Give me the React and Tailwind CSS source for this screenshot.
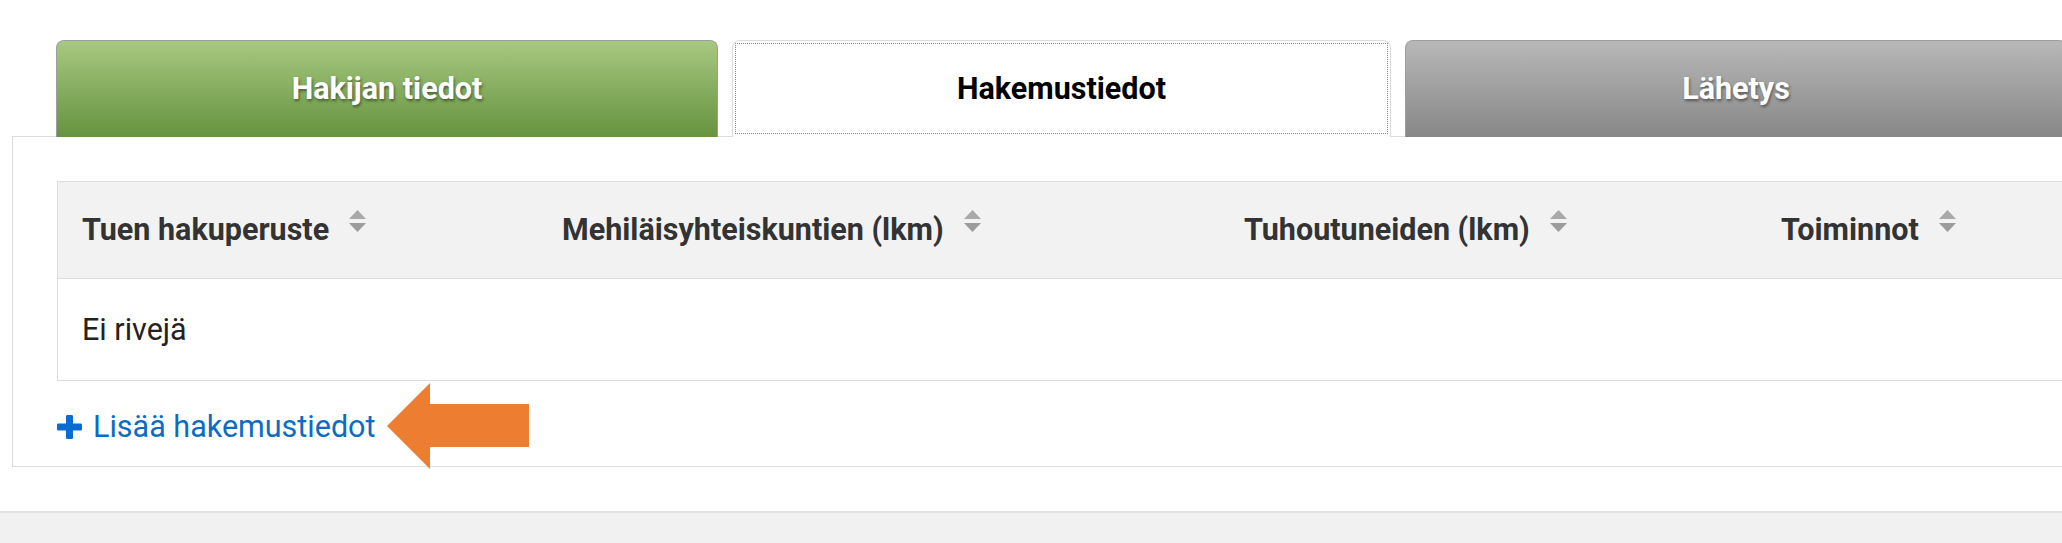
import React from "react";

function SortIcon() {
  return (
    <svg width="17" height="22" viewBox="0 0 17 22" className="ml-[20px] mb-[18px] shrink-0">
      <polygon points="8.5,0 17,9 0,9" fill="#a9a9a9" />
      <polygon points="0,13 17,13 8.5,22" fill="#9c9c9c" />
    </svg>
  );
}

function HeaderCell({ children }) {
  return (
    <div className="flex items-center pl-[24px] h-full">
      <span>{children}</span>
      <SortIcon />
    </div>
  );
}

export default function App() {
  return (
    <div
      className="relative w-[2062px] h-[543px] overflow-hidden bg-white"
      style={{ fontFamily: "Roboto, 'Liberation Sans', Arial, sans-serif" }}
    >
      <div className="w-[2200px] pt-[40px] pl-[12px]">
        {/* Tabs */}
        <div className="flex gap-[14px] ml-[44px] relative z-10 -mb-px">
          <div className="w-[662px] h-[97px] rounded-t-[8px] border border-b-0 border-[#9d9d9d] bg-gradient-to-b from-[#a7c880] to-[#66933f] flex items-center justify-center">
            <span className="text-white font-bold text-[30.5px] [text-shadow:1px_2px_3px_rgba(0,0,0,0.45)]">
              Hakijan tiedot
            </span>
          </div>
          <div className="w-[659px] h-[97px] rounded-t-[8px] border border-b-0 border-[#dddddd] bg-white flex p-[2px] pb-[3px]">
            <div className="flex-1 border border-dotted border-[#8a8a8a] flex items-center justify-center">
              <span className="text-black font-bold text-[30.5px]">Hakemustiedot</span>
            </div>
          </div>
          <div className="w-[662px] h-[97px] rounded-t-[8px] border border-b-0 border-[#9d9d9d] bg-gradient-to-b from-[#b8b8b8] to-[#878787] flex items-center justify-center">
            <span className="text-white font-bold text-[30.5px] [text-shadow:1px_2px_3px_rgba(0,0,0,0.45)]">
              Lähetys
            </span>
          </div>
        </div>

        {/* Panel */}
        <div className="border border-[#dddddd] h-[331px] pt-[44px] pl-[44px] pr-[44px]">
          <div className="border border-[#dddddd] text-[#333] text-[30.5px]">
            <div className="grid grid-cols-[480px_682px_537px_1fr] h-[97px] bg-[#f2f2f2] border-b border-[#dddddd] font-bold">
              <HeaderCell>Tuen hakuperuste</HeaderCell>
              <HeaderCell>Mehiläisyhteiskuntien (lkm)</HeaderCell>
              <HeaderCell>Tuhoutuneiden (lkm)</HeaderCell>
              <HeaderCell>Toiminnot</HeaderCell>
            </div>
            <div className="h-[101px] flex items-center pl-[24px] text-[#222]">Ei rivejä</div>
          </div>
          <div className="mt-[23px] h-[45px] flex items-center text-[30.5px] text-[#0a6cc4]">
            <svg width="25" height="24" viewBox="0 0 25 24" className="shrink-0">
              <rect x="0" y="8.5" width="25" height="7" rx="1.2" fill="#0a6cd0" />
              <rect x="9" y="0" width="7" height="24" rx="1.2" fill="#0a6cd0" />
            </svg>
            <span className="ml-[11px]">Lisää hakemustiedot</span>
          </div>
        </div>

        <div className="h-[44px]" />
      </div>
      <div className="h-[40px] bg-[#f1f1f1] border-t-2 border-[#e2e2e2]" />

      {/* Annotation arrow */}
      <svg
        className="absolute left-[387px] top-[383px]"
        width="142"
        height="86"
        viewBox="0 0 142 86"
      >
        <polygon points="0,43 43,0 43,21 142,21 142,64 43,64 43,86" fill="#ed7d31" />
      </svg>
    </div>
  );
}
